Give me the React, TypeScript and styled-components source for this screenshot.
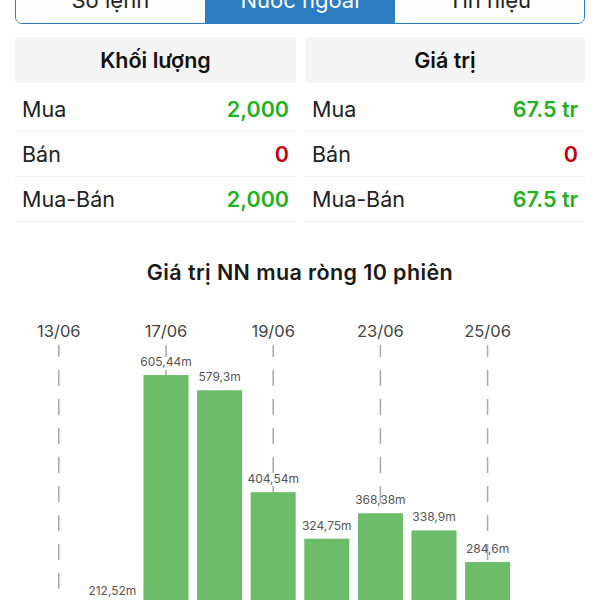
import React from 'react';
import styled, { createGlobalStyle } from 'styled-components';

const GlobalStyle = createGlobalStyle`
  html, body {
    margin: 0;
    padding: 0;
    overflow: hidden;
    background: #fff;
  }
  body {
    font-family: 'Inter', 'Noto Sans', sans-serif;
    color: #222;
  }
`;

const Page = styled.div`
  width: 600px;
  padding: 0 15px;
  box-sizing: border-box;
`;

const Tabs = styled.div`
  display: flex;
  margin-top: -24px;
  height: 48px;
  border: 1.5px solid #2b7dbf;
  border-radius: 7px;
  overflow: hidden;
  box-sizing: border-box;
`;

const Tab = styled.div<{ active?: boolean }>`
  flex: 1 1 0;
  display: flex;
  align-items: center;
  justify-content: center;
  font-size: 22px;
  color: ${p => (p.active ? '#fff' : '#222')};
  background: ${p => (p.active ? '#2b7dbf' : '#fdfdfd')};
  & + & {
    border-left: 1px solid #2b7dbf;
  }
`;

const Tables = styled.div`
  display: grid;
  grid-template-columns: 281px 1fr;
  gap: 9px;
  margin-top: 13px;
`;

const Table = styled.div`
  display: flex;
  flex-direction: column;
`;

const TableHead = styled.div`
  height: 46px;
  display: flex;
  align-items: center;
  justify-content: center;
  background: #f4f4f4;
  font-size: 21.5px;
  font-weight: 600;
  color: #111;
  margin-bottom: 4px;
`;

const Row = styled.div`
  height: 44px;
  display: flex;
  align-items: center;
  justify-content: space-between;
  padding: 0 7px;
  border-bottom: 1px solid #efefef;
  font-size: 21.5px;
`;

const Label = styled.span`
  color: #222;
`;

const Value = styled.span<{ tone: 'up' | 'down' }>`
  font-weight: 600;
  color: ${p => (p.tone === 'up' ? '#1fb21f' : '#c4000c')};
`;

const ChartTitle = styled.div`
  margin-top: 37px;
  text-align: center;
  font-size: 21.5px;
  font-weight: 600;
  letter-spacing: 0.4px;
  line-height: 26px;
  color: #1a1a1a;
`;

const ChartBox = styled.div`
  margin: 16px -15px 0;
`;

type Stat = { label: string; value: string; tone: 'up' | 'down' };

const volume: Stat[] = [
  { label: 'Mua', value: '2,000', tone: 'up' },
  { label: 'Bán', value: '0', tone: 'down' },
  { label: 'Mua-Bán', value: '2,000', tone: 'up' },
];

const amount: Stat[] = [
  { label: 'Mua', value: '67.5 tr', tone: 'up' },
  { label: 'Bán', value: '0', tone: 'down' },
  { label: 'Mua-Bán', value: '67.5 tr', tone: 'up' },
];

const sessions = [
  { date: '13/06', value: 98.2 },
  { date: '16/06', value: 212.52 },
  { date: '17/06', value: 605.44 },
  { date: '18/06', value: 579.3 },
  { date: '19/06', value: 404.54 },
  { date: '20/06', value: 324.75 },
  { date: '23/06', value: 368.38 },
  { date: '24/06', value: 338.9 },
  { date: '25/06', value: 284.6 },
  { date: '26/06', value: 61.3 },
];

const fmt = (v: number) => String(v).replace('.', ',') + 'm';

const StatTable: React.FC<{ title: string; rows: Stat[] }> = ({ title, rows }) => (
  <Table>
    <TableHead>{title}</TableHead>
    {rows.map(r => (
      <Row key={r.label}>
        <Label>{r.label}</Label>
        <Value tone={r.tone}>{r.value}</Value>
      </Row>
    ))}
  </Table>
);

const BarChart: React.FC = () => {
  const left = 32;
  const pitch = 53.6;
  const barW = 45;
  const base = 427;
  const scale = 0.583;
  return (
    <svg width={600} height={320} viewBox="0 0 600 320">
      {sessions.map((s, i) =>
        i % 2 === 0 ? (
          <g key={'d' + s.date}>
            <text
              x={left + pitch * i + pitch / 2}
              y={36}
              textAnchor="middle"
              fontSize={16.5}
              fill="#444"
              fontFamily="Inter, 'Noto Sans', sans-serif"
            >
              {s.date}
            </text>
            <line
              x1={left + pitch * i + pitch / 2}
              x2={left + pitch * i + pitch / 2}
              y1={44}
              y2={base}
              stroke="#a9a9a9"
              strokeWidth={1.5}
              strokeDasharray="16 13"
              strokeDashoffset={4}
            />
          </g>
        ) : null,
      )}
      {sessions.map((s, i) => {
        const cx = left + pitch * i + pitch / 2;
        const top = base - s.value * scale;
        return (
          <rect key={'b' + s.date} x={cx - barW / 2} y={top} width={barW} height={base - top} fill="#6dbc69" />
        );
      })}
      {sessions.map((s, i) => {
        const cx = left + pitch * i + pitch / 2;
        const top = base - s.value * scale;
        return (
          <text
            key={'v' + s.date}
            x={cx}
            y={top - 9}
            textAnchor="middle"
            fontSize={12}
            fill="#555"
            fontFamily="Inter, 'Noto Sans', sans-serif"
          >
            {fmt(s.value)}
          </text>
        );
      })}
    </svg>
  );
};

export default function App() {
  return (
    <>
      <GlobalStyle />
      <Page>
        <Tabs>
          <Tab>Số lệnh</Tab>
          <Tab active>Nước ngoài</Tab>
          <Tab>Tín hiệu</Tab>
        </Tabs>
        <Tables>
          <StatTable title="Khối lượng" rows={volume} />
          <StatTable title="Giá trị" rows={amount} />
        </Tables>
        <ChartTitle>Giá trị NN mua ròng 10 phiên</ChartTitle>
        <ChartBox>
          <BarChart />
        </ChartBox>
      </Page>
    </>
  );
}
